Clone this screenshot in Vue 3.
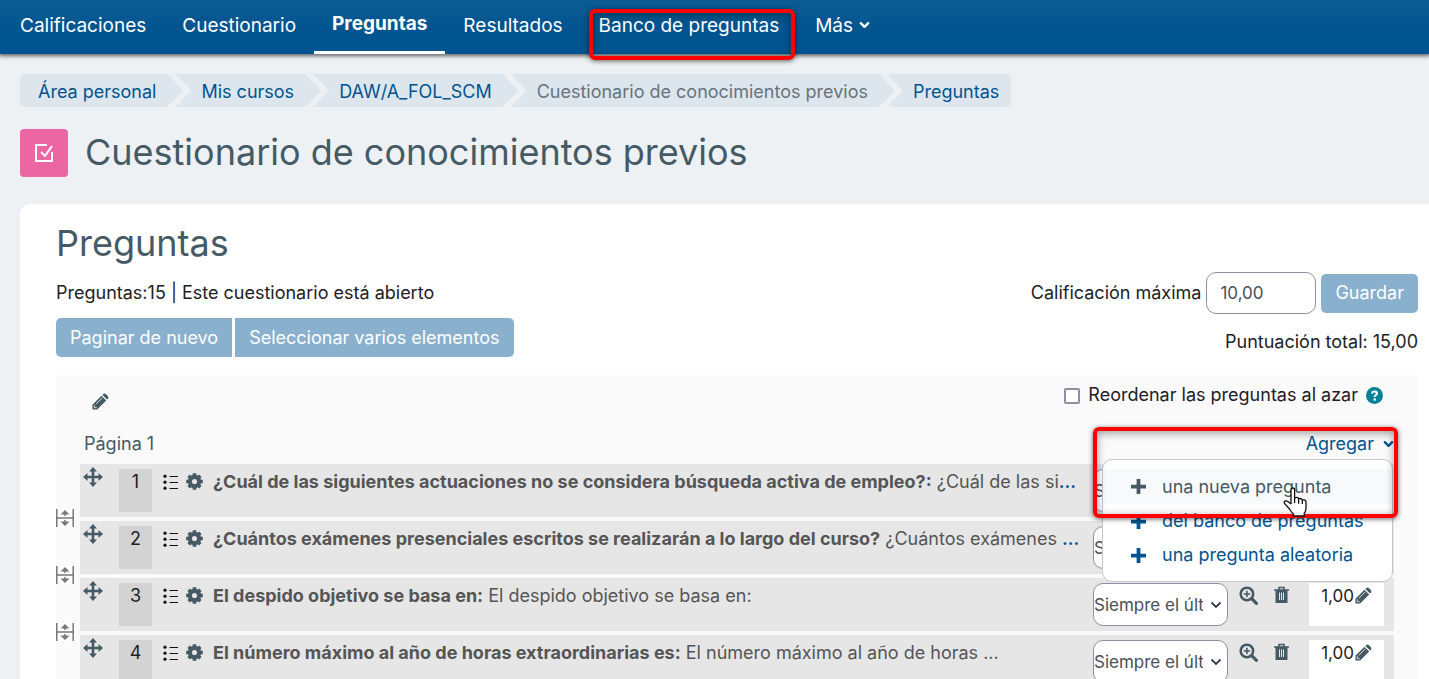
<script setup>
import { ref } from 'vue'

const tabs = [
  { label: 'Calificaciones' },
  { label: 'Cuestionario' },
  { label: 'Preguntas', active: true },
  { label: 'Resultados' },
  { label: 'Banco de preguntas', marked: true },
  { label: 'Más', more: true }
]

const crumbs = [
  { label: 'Área personal' },
  { label: 'Mis cursos' },
  { label: 'DAW/A_FOL_SCM' },
  { label: 'Cuestionario de conocimientos previos', muted: true },
  { label: 'Preguntas' }
]

const questions = [
  { id: 1, name: '¿Cuál de las siguientes actuaciones no se considera búsqueda activa de empleo?:', text: '¿Cuál de las si', cut: true },
  { id: 2, name: '¿Cuántos exámenes presenciales escritos se realizarán a lo largo del curso?', text: '¿Cuántos exámenes ', cut: true },
  { id: 3, name: 'El despido objetivo se basa en:', text: 'El despido objetivo se basa en:' },
  { id: 4, name: 'El número máximo al año de horas extraordinarias es:', text: 'El número máximo al año de horas ...' }
]

const menu = ['una nueva pregunta', 'del banco de preguntas', 'una pregunta aleatoria']

const grade = ref('10,00')
const shuffle = ref(false)
</script>

<template>
  <div class="page">
    <header class="topbar">
      <nav class="tabs">
        <a v-for="t in tabs" :key="t.label" href="#" class="tab" :class="{ active: t.active }">
          <span>{{ t.label }}</span>
          <svg v-if="t.more" class="caret" viewBox="0 0 12 8"><path d="M2 2l4 4 4-4" /></svg>
          <span v-if="t.marked" class="mark mark-tab"></span>
        </a>
      </nav>
    </header>

    <nav class="crumbs" aria-label="Ruta">
      <a v-for="c in crumbs" :key="c.label" href="#" class="crumb" :class="{ muted: c.muted }">{{ c.label }}</a>
    </nav>

    <div class="title">
      <span class="badge">
        <svg viewBox="0 0 24 24"><path d="M15 4H4v16h16v-9" /><path d="M9 11l4 4 7-10" /></svg>
      </span>
      <h1>Cuestionario de conocimientos previos</h1>
    </div>

    <main class="panel">
      <h2>Preguntas</h2>
      <div class="tools">
        <div class="left">
          <p>Preguntas:15 | Este cuestionario está abierto</p>
          <div class="group">
            <button type="button" class="btn">Paginar de nuevo</button>
            <button type="button" class="btn">Seleccionar varios elementos</button>
          </div>
        </div>
        <div class="right">
          <div class="grade">
            <label for="maxgrade">Calificación máxima</label>
            <input id="maxgrade" v-model="grade" type="text" />
            <button type="button" class="btn save">Guardar</button>
          </div>
          <p>Puntuación total: 15,00</p>
        </div>
      </div>

      <section class="sheet">
        <div class="head">
          <a href="#" class="ico" aria-label="Editar título">
            <svg class="pencil" viewBox="0 0 18 18"><path d="M.5 17.500v-5L10 3l5 5-9.500 9.500zM11 2l1-1q1.500-1 3 .5l1.500 1.500q1.500 1.500 .5 3l-1 1z" /><path class="cut" d="M4 12l7-7M2.500 13v2.500h2.500" /></svg>
          </a>
          <div class="shuffle">
            <input id="shuffle" v-model="shuffle" type="checkbox" />
            <label for="shuffle">Reordenar las preguntas al azar</label>
            <svg class="help" viewBox="0 0 18 18"><circle cx="9" cy="9" r="9" /><path d="M6.300 7q.3-2.300 2.700-2.300 2.600 0 2.600 2.100 0 1-1.300 1.700Q9.100 9.200 9.100 10.600" /><rect x="8" y="12" width="2.400" height="2.400" /></svg>
          </div>
        </div>

        <div class="pagebar">
          <span>Página 1</span>
          <div class="add">
            <a href="#" class="addlink">Agregar <svg class="caret" viewBox="0 0 12 8"><path d="M2 2l4 4 4-4" /></svg></a>
            <div class="menu">
              <a v-for="(m, i) in menu" :key="m" href="#" :class="{ hover: i === 0 }">
                <svg viewBox="0 0 16 16"><path d="M8 0v16M0 8h16" /></svg>{{ m }}
              </a>
            </div>
            <span class="mark mark-add"></span>
            <svg class="hand" viewBox="0 0 26 32">
              <path d="M9 18V4q0-2 1.800-2t1.800 2v8q3-1.600 4 .8 2.700-1 3.700 1.200 3.700-.8 3.700 2v6q0 3-1.800 5.500V30H11.500v-2q-2-1.500-4-5l-5-5.500q-1-2 1-2.700 2-.3 5.500 3.200M12.600 12v5M16.600 12.800v5M20.300 14v4" />
            </svg>
          </div>
        </div>

        <ul class="list">
          <li v-for="q in questions" :key="q.id">
            <div class="row">
              <svg class="move" viewBox="0 0 20 20"><path class="line" d="M10 3v14M3 10h14" /><path d="M10 0l4 4.500H6zM10 20l4-4.500H6zM0 10l4.500-4v8zM20 10l-4.500-4v8z" /></svg>
              <span class="num">{{ q.id }}</span>
              <svg class="type" viewBox="0 0 16 16"><path d="M6.500 2.500H15M6.500 8.500H15M6.500 14.500H15" /><circle cx="2" cy="2.200" r="1.600" /><circle cx="2" cy="8.200" r="1.600" /><circle cx="2" cy="14.200" r="1.600" /></svg>
              <svg class="gear" viewBox="0 0 18 18"><path class="teeth" d="M9 .2v17.600M.2 9h17.600M2.800 2.800l12.400 12.400M15.200 2.800L2.800 15.200" /><circle cx="9" cy="9" r="4.900" /></svg>
              <div class="name"><b>{{ q.name }}</b> {{ q.text }}<a v-if="q.cut" href="#">...</a></div>
              <select :aria-label="'Versión de la pregunta ' + q.id"><option>Siempre el último</option></select>
              <a href="#" class="ico zoom" aria-label="Vista previa">
                <svg viewBox="0 0 18 18"><circle cx="7.500" cy="7.500" r="5.900" /><path class="thick" d="M12 12l4.500 4.500" /><path class="thin" d="M7.500 4.500v6M4.500 7.500h6" /></svg>
              </a>
              <a href="#" class="ico trash" aria-label="Eliminar">
                <svg viewBox="0 0 15 18"><path d="M5 3.500V1.500h5v2M0 4h15" /><path class="can" d="M2.500 5h10v11h-10z" /><path class="bars" d="M5.500 6.500v7.500M7.500 6.500v7.500M9.500 6.500v7.500" /></svg>
              </a>
              <span class="mark-box">1,00<svg class="pencil" viewBox="0 0 18 18"><path d="M.5 17.500v-5L10 3l5 5-9.500 9.500zM11 2l1-1q1.500-1 3 .5l1.500 1.500q1.500 1.500 .5 3l-1 1z" /><path class="cut" d="M4 12l7-7M2.500 13v2.500h2.500" /></svg></span>
            </div>
            <svg class="split" viewBox="0 0 18 18"><rect width="18" height="18" /><path class="line" d="M.8 0v18M17.200 0v18M0 9h18M9 4v3M9 11v3" /><path d="M9 1l4.500 4.500h-9zM9 17l4.500-4.500h-9z" /></svg>
          </li>
        </ul>
      </section>
    </main>
  </div>
</template>

<style>
html, body { margin: 0; background: #edf1f4; overflow: hidden; }
</style>

<style scoped>
* { box-sizing: border-box; }
.page { height: 100vh; overflow: hidden; font-family: Inter, "Open Sans", sans-serif; font-size: 18px; line-height: 26px; color: #1d2125; }
a { color: #00548f; text-decoration: none; }
p, h1, h2, ul { margin: 0; padding: 0; }
.topbar { position: relative; height: 54px; background: linear-gradient(#0b5c94, #00548f 60%); box-shadow: 0 1px 4px 1px rgba(0, 0, 0, .6); }
.tabs { display: flex; padding-left: 2px; height: 100%; font-size: 19px; }
.tab { position: relative; display: flex; align-items: flex-start; gap: 6px; padding: 13px 18px 0; color: #fff; white-space: nowrap; }
.tab.active { font-weight: 700; border-bottom: 3px solid #fff; padding-top: 11px; }
.caret { width: 11px; height: 8px; fill: none; stroke: currentColor; stroke-width: 2.6; stroke-linecap: round; stroke-linejoin: round; }
.tab .caret { margin-top: 8px; }
.mark { position: absolute; border: 4px solid #f00; border-radius: 6px; box-shadow: 0 1px 5px rgba(0, 0, 0, .6), inset 0 2px 8px rgba(0, 0, 0, .4); pointer-events: none; }
.mark-tab { left: 8px; right: 2px; top: 9px; height: 51px; }
.crumbs { display: flex; margin: 20px 20px 0; }
.crumb { height: 33px; line-height: 35px; padding: 0 27px 0 26px; margin-left: -8px; background: #dce6ec; white-space: nowrap; clip-path: polygon(0 0, calc(100% - 16px) 0, 100% 50%, calc(100% - 16px) 100%, 0 100%, 16px 50%); }
.crumb:first-child { margin-left: 0; padding-left: 18px; border-radius: 5px; clip-path: polygon(0 0, calc(100% - 16px) 0, 100% 50%, calc(100% - 16px) 100%, 0 100%); }
.crumb:last-child { padding-right: 12px; border-radius: 5px; clip-path: polygon(0 0, 100% 0, 100% 100%, 0 100%, 16px 50%); }
.crumb.muted { color: #6a737b; }
.title { display: flex; align-items: center; gap: 17px; margin: 22px 20px 0; }
.badge { display: grid; place-items: center; width: 48px; height: 48px; border-radius: 4px; background: #ed66a4; }
.badge svg { width: 24px; height: 24px; fill: none; stroke: #fff; stroke-width: 2; }
h1, h2 { font-weight: 400; font-size: 36px; line-height: 44px; color: #455a64; white-space: nowrap; }
h1 { padding-bottom: 2px; }
.panel { margin: 27px 0 0 20px; padding: 17px 11px 0 36px; background: #fff; border-radius: 10px 0 0 0; }
.tools { display: flex; justify-content: space-between; padding-top: 7px; }
.left p { margin-top: 8px; }
.group { display: flex; gap: 3px; margin-top: 12px; }
.btn { height: 39px; padding: 0 14px; border: 0; background: #89b0cd; color: #fff; font: inherit; }
.group .btn:first-child { border-radius: 5px 0 0 5px; }
.group .btn:last-child { border-radius: 0 5px 5px 0; }
.save { border-radius: 5px; }
.right { text-align: right; }
.grade { display: flex; align-items: center; gap: 5px; }
.grade input { width: 110px; height: 42px; padding: 0 13px; border: 1px solid #8f8fa3; border-radius: 10px; background: #fff; font: inherit; font-size: 17px; color: #495057; }
.right p { margin-top: 15px; }
.sheet { margin-top: 18px; padding: 0 24px; background: #fafafa; }
.head { display: flex; justify-content: space-between; padding: 7px 11px 0 12px; }
.ico { color: #455a64; }
.head .ico { padding-top: 9px; }
.pencil { width: 17px; height: 17px; fill: #455a64; }
.pencil .cut { fill: none; stroke: #fff; stroke-width: .8; }
.shuffle { display: flex; align-items: flex-start; gap: 8px; }
.shuffle input { appearance: none; width: 16px; height: 16px; margin: 6px 0 0; border: 2px solid #8f8fa3; border-radius: 2px; background: #fff; }
.help { width: 17px; height: 17px; margin-top: 5px; fill: #008196; }
.help path { fill: none; stroke: #fff; stroke-width: 2.2; }
.help rect { fill: #fff; }
.pagebar { display: flex; justify-content: space-between; padding: 14px 0 7px 4px; color: #455a64; }
.add { position: relative; z-index: 2; }
.addlink { display: flex; align-items: center; gap: 9px; }
.menu { position: absolute; top: 28px; right: 1px; width: 291px; padding: 9px 0; border: 1px solid #c4c7ca; border-radius: 10px; background: #fff; }
.menu a { display: flex; align-items: center; gap: 16px; height: 34px; padding-left: 28px; white-space: nowrap; }
.menu a svg { width: 15px; height: 15px; stroke: currentColor; stroke-width: 4; }
.menu .hover { height: 35px; background: #f8f9fa; color: #455a64; }
.hand { position: absolute; top: 55px; right: 86px; width: 26px; height: 32px; fill: #fff; stroke: #111; stroke-width: 1.3; }
.mark-add { top: -4px; right: -4px; width: 305px; height: 91px; }
.list { list-style: none; }
.list li { position: relative; padding-bottom: 4px; }
.row { display: flex; align-items: flex-start; height: 53px; padding: 5px 10px 0 3px; background: #e6e6e6; color: #555; }
.row > * { flex: none; }
.move { width: 20px; height: 20px; margin-top: -2px; fill: #455a64; }
.line { stroke: #455a64; stroke-width: 2.6; fill: none; }
.num { width: 33px; height: 43px; margin-left: 16px; background: #d3d3d3; text-align: center; color: #1d2125; }
.type { width: 16px; height: 16px; margin: 5px 0 0 11px; stroke: #111; stroke-width: 1.2; fill: #111; }
.type circle { stroke: none; }
.gear { width: 17px; height: 17px; margin: 4px 0 0 7px; fill: none; stroke: #455a64; stroke-width: 4.4; }
.gear .teeth { stroke-width: 3.8; }
.gear circle { fill: #e6e6e6; }
.row .name { flex: 1 1 0; min-width: 0; margin-left: 10px; white-space: nowrap; overflow: hidden; }
.name b { font-weight: 700; }
.name a { font-weight: 600; }
select { appearance: none; width: 135px; height: 43px; padding: 0 24px 0 0; border: 1px solid #8f8fa3; border-radius: 10px; font: inherit; font-size: 17px; color: #495057; background: #fff url("data:image/svg+xml,%3Csvg xmlns='http://www.w3.org/2000/svg' viewBox='0 0 12 8'%3E%3Cpath d='M1.500 1.500l4.500 4.500 4.500-4.500' fill='none' stroke='%23343a40' stroke-width='1.800'/%3E%3C/svg%3E") no-repeat right 5px center / 12px 8px; }
.zoom { margin-left: 11px; }
.zoom svg { display: block; width: 19px; height: 19px; margin-top: 3px; fill: none; stroke: #455a64; stroke-width: 2.4; }
.zoom .thick { stroke-width: 3; stroke-linecap: round; }
.zoom .thin { stroke-width: 1.5; }
.trash { margin-left: 16px; }
.trash svg { display: block; width: 15px; height: 18px; margin-top: 3px; fill: none; stroke: #455a64; stroke-width: 1.6; }
.trash .can { fill: #455a64; stroke-width: 2; }
.trash .bars { stroke: #e6e6e6; stroke-width: 1; }
.mark-box { display: flex; align-items: flex-start; justify-content: flex-end; gap: 1px; width: 75px; height: 43px; margin-left: 20px; padding-right: 12px; background: #fff; color: #1d2125; font-size: 17px; }
.mark-box .pencil { margin-top: 4px; }
.split { position: absolute; left: -24px; bottom: -6px; width: 18px; height: 18px; fill: #777; }
.split rect { fill: #fff; }
.split .line { stroke: #777; stroke-width: 1.5; }
</style>
